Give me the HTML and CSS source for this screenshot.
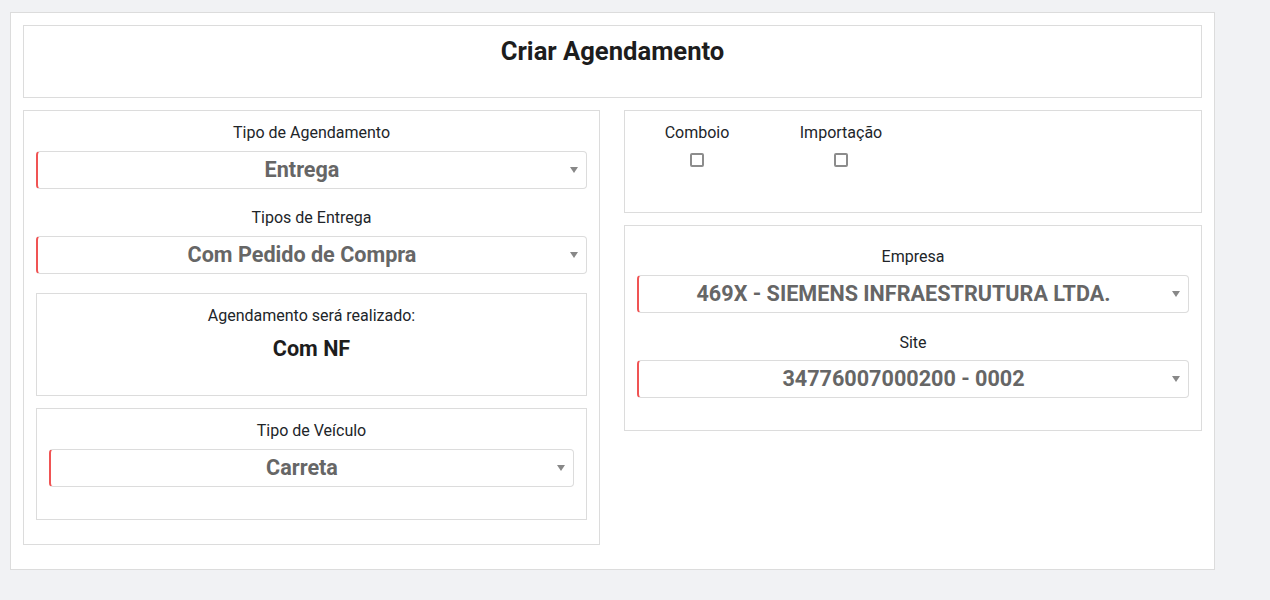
FILE: index.html
```html
<!DOCTYPE html>
<html lang="pt-BR">
<head>
    <meta charset="UTF-8">
    <meta name="viewport" content="width=device-width, initial-scale=1.0">
    <title>Criar Agendamento</title>
    <link rel="stylesheet" href="styles.css">
</head>
<body>

    <div class="page">
        <div class="box header">
            <h1>Criar Agendamento</h1>
        </div>

        <div class="columns">
            <div class="box left">
                <div class="group">
                    <label>Tipo de Agendamento</label>
                    <div class="select">Entrega<span class="arrow"></span></div>
                </div>
                <div class="group">
                    <label>Tipos de Entrega</label>
                    <div class="select">Com Pedido de Compra<span class="arrow"></span></div>
                </div>

                <div class="box inner">
                    <div class="group">
                        <label>Agendamento será realizado:</label>
                        <div class="value">Com NF</div>
                    </div>
                </div>

                <div class="box inner">
                    <div class="group">
                        <label>Tipo de Veículo</label>
                        <div class="select">Carreta<span class="arrow"></span></div>
                    </div>
                </div>
            </div>

            <div class="right">
                <div class="box checks">
                    <div class="check">
                        <label>Comboio</label>
                        <span class="checkbox"></span>
                    </div>
                    <div class="check">
                        <label>Importação</label>
                        <span class="checkbox"></span>
                    </div>
                </div>

                <div class="box company">
                    <div class="group">
                        <label>Empresa</label>
                        <div class="select">469X - SIEMENS INFRAESTRUTURA LTDA.<span class="arrow"></span></div>
                    </div>
                    <div class="group">
                        <label>Site</label>
                        <div class="select">34776007000200 - 0002<span class="arrow"></span></div>
                    </div>
                </div>
            </div>
        </div>
    </div>

</body>
</html>
```

FILE: styles.css
```css
* {
    box-sizing: border-box;
}

body {
    font-family: Roboto, "Liberation Sans", sans-serif;
    background-color: #f1f2f4;
    color: #212529;
    margin: 0;
    padding: 12px 0 0 10px;
}

.page {
    width: 1205px;
    background: white;
    border: 1px solid #dcdcdc;
    padding: 12px;
}

.box {
    border: 1px solid #dcdcdc;
    background: white;
    padding: 12px;
}

.header {
    margin-bottom: 12px;
}

h1 {
    margin: 0 0 20px;
    font-size: 25.6px;
    line-height: 27px;
    font-weight: bold;
    text-align: center;
    color: #1d1d1d;
}

.columns {
    display: grid;
    grid-template-columns: 577px 1fr;
    column-gap: 24px;
    align-items: start;
}

.left {
    margin-bottom: 12px;
}

.group {
    margin-bottom: 19px;
    text-align: center;
}

label {
    display: block;
    font-size: 16px;
    line-height: 20px;
    margin-bottom: 8px;
}

.select {
    position: relative;
    height: 38px;
    line-height: 36px;
    padding-right: 20px;
    border: 1px solid #dcdcdc;
    border-left: 2px solid #f05454;
    border-radius: 4px;
    font-size: 21.6px;
    font-weight: bold;
    color: #666;
    text-align: center;
}

.arrow {
    position: absolute;
    right: 8px;
    top: 15px;
    border-left: 4px solid transparent;
    border-right: 4px solid transparent;
    border-top: 6px solid #888;
}

.value {
    font-size: 21.6px;
    line-height: 30px;
    font-weight: bold;
    color: #1d1d1d;
}

.inner {
    margin-bottom: 12px;
}

.inner:last-child .group {
    margin-bottom: 20px;
}

.checks {
    display: flex;
    gap: 24px;
    padding-bottom: 40px;
    margin-bottom: 12px;
}

.check {
    width: 120px;
    text-align: center;
}

.check label {
    margin-bottom: 10px;
}

.checkbox {
    display: inline-block;
    width: 14px;
    height: 14px;
    border: 2px solid #8c8c8c;
    border-radius: 2px;
    vertical-align: top;
}

.company {
    padding-top: 21px;
    padding-bottom: 13px;
}

.company .group + .group label {
    padding-top: 1px;
    margin-bottom: 7px;
}
```
